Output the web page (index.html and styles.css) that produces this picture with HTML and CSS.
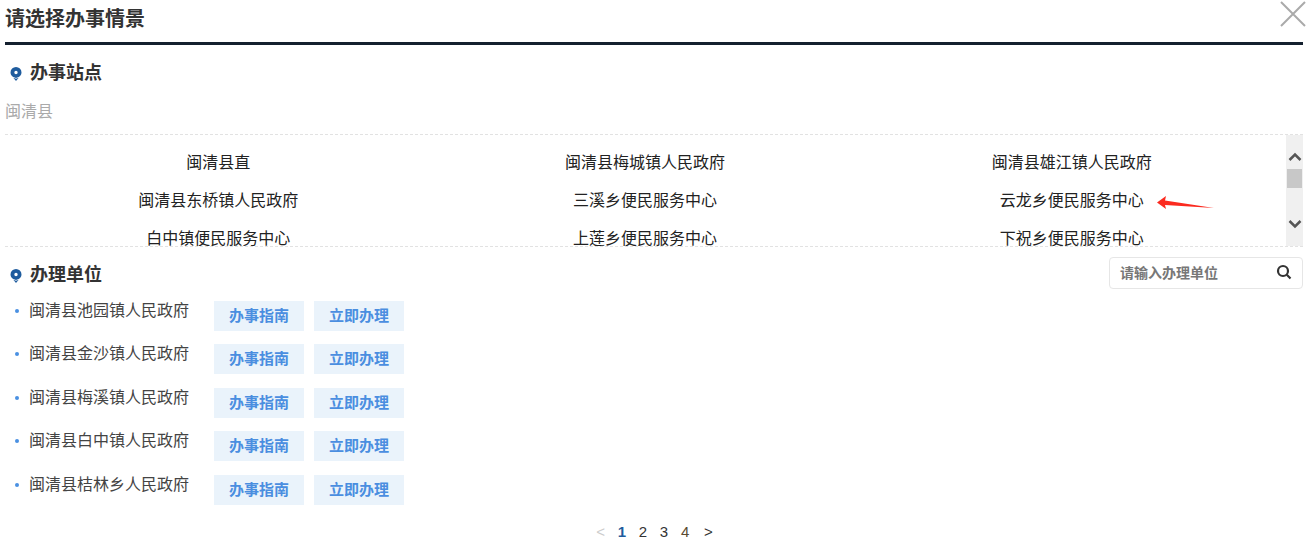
FILE: index.html
```html
<!DOCTYPE html>
<html lang="zh">
<head>
<meta charset="utf-8">
<title>请选择办事情景</title>
<link rel="stylesheet" href="styles.css">
</head>
<body>
<div class="modal">
  <header class="modal-head">
    <h1>请选择办事情景</h1>
    <svg class="close" viewBox="0 0 26 26"><path d="M1 1 25 25M25 1 1 25"/></svg>
  </header>
  <h2 class="sec-title site-title"><svg class="pin" viewBox="0 0 12 14"><path fill-rule="evenodd" d="M6 0a5.500 5.500 0 0 1 5.500 5.500c0 2.200-1.300 3.500-2.800 4.500L6 11l-2.700-1C1.800 9 .5 7.700.5 5.500A5.500 5.500 0 0 1 6 0Zm0 3.800a1.700 1.700 0 1 0 0 3.400 1.700 1.700 0 0 0 0-3.400ZM3.300 10.800 6 11.800l2.700-1L6 14Z"/></svg>办事站点</h2>
  <div class="county">闽清县</div>
  <div class="sites">
    <div class="site-grid">
      <a>闽清县直</a><a>闽清县梅城镇人民政府</a><a>闽清县雄江镇人民政府</a>
      <a>闽清县东桥镇人民政府</a><a>三溪乡便民服务中心</a><a>云龙乡便民服务中心</a>
      <a>白中镇便民服务中心</a><a>上莲乡便民服务中心</a><a>下祝乡便民服务中心</a>
    </div>
    <div class="scrollbar">
      <svg class="sb-arrow" viewBox="0 0 14 10"><path d="M1.500 8 7 2.500 12.500 8"/></svg>
      <div class="sb-thumb"></div>
      <svg class="sb-arrow sb-down" viewBox="0 0 14 10"><path d="M1.500 2 7 7.500 12.500 2"/></svg>
    </div>
    <svg class="red-arrow" viewBox="0 0 58 14"><path d="M0 6.500 9 0 8 4.500 57 12 8 9 9 13Z"/></svg>
  </div>
  <div class="unit-head">
    <h2 class="sec-title"><svg class="pin" viewBox="0 0 12 14"><path fill-rule="evenodd" d="M6 0a5.500 5.500 0 0 1 5.500 5.500c0 2.200-1.300 3.500-2.800 4.500L6 11l-2.700-1C1.800 9 .5 7.700.5 5.500A5.500 5.500 0 0 1 6 0Zm0 3.800a1.700 1.700 0 1 0 0 3.400 1.700 1.700 0 0 0 0-3.400ZM3.300 10.800 6 11.800l2.700-1L6 14Z"/></svg>办理单位</h2>
    <div class="search">
      <span>请输入办理单位</span>
      <svg viewBox="0 0 16 16"><circle cx="7" cy="7" r="5"/><path d="m10.800 10.800 3.700 3.700"/></svg>
    </div>
  </div>
  <ul class="units">
    <li><span class="name">闽清县池园镇人民政府</span><a class="btn">办事指南</a><a class="btn">立即办理</a></li>
    <li><span class="name">闽清县金沙镇人民政府</span><a class="btn">办事指南</a><a class="btn">立即办理</a></li>
    <li><span class="name">闽清县梅溪镇人民政府</span><a class="btn">办事指南</a><a class="btn">立即办理</a></li>
    <li><span class="name">闽清县白中镇人民政府</span><a class="btn">办事指南</a><a class="btn">立即办理</a></li>
    <li><span class="name">闽清县桔林乡人民政府</span><a class="btn">办事指南</a><a class="btn">立即办理</a></li>
  </ul>
  <nav class="pager">
    <span class="off">&lt;</span><span class="cur">1</span><span>2</span><span>3</span><span class="four">4</span><span>&gt;</span>
  </nav>
</div>
</body>
</html>
```

FILE: styles.css
```css
* { box-sizing: border-box; }
html, body { margin: 0; padding: 0; background: #fff; }
body {
  width: 1310px;
  height: 557px;
  overflow: hidden;
  font-family: "Noto Sans CJK SC", "Liberation Sans", sans-serif;
  color: #333;
}
.modal { padding: 0 7px 0 5px; }
.modal-head {
  position: relative;
  height: 45px;
  border-bottom: 3px solid #14202e;
}
.modal-head h1 {
  margin: 0;
  font-size: 20px;
  line-height: 36px;
  font-weight: 700;
  color: #333;
}
.close {
  position: absolute;
  right: -3px;
  top: 1px;
  width: 26px;
  height: 26px;
  fill: none;
  stroke: #aaa;
  stroke-width: 2;
}
.sec-title {
  display: flex;
  align-items: center;
  margin: 0;
  font-size: 18px;
  line-height: 28px;
  font-weight: 700;
  color: #333;
}
.site-title { margin-top: 12px; }
.pin {
  width: 12px;
  height: 14px;
  margin: 5px 8px 0 5px;
  fill: #1f5c9e;
}
.county {
  margin-top: 13px;
  height: 37px;
  font-size: 16px;
  line-height: 24px;
  color: #aaa;
  border-bottom: 1px dashed #e2e2e2;
}
.sites {
  position: relative;
  display: flex;
  height: 112px;
  overflow: hidden;
  border-bottom: 1px dashed #e2e2e2;
}
.site-grid {
  flex: 1;
  display: grid;
  grid-template-columns: repeat(3, 1fr);
  grid-auto-rows: 38px;
  padding: 7px 1px 0 0;
  font-size: 16px;
  line-height: 38px;
  color: #222;
  text-align: center;
}
.scrollbar {
  width: 17px;
  height: 111px;
  background: #f0f0f0;
  display: flex;
  flex-direction: column;
  align-items: center;
  padding-top: 17px;
}
.sb-arrow {
  width: 14px;
  height: 10px;
  fill: none;
  stroke: #555;
  stroke-width: 2.500;
}
.sb-thumb {
  width: 15px;
  height: 19px;
  margin-top: 7px;
  background: #c8c8c8;
}
.sb-down { margin-top: 31px; }
.red-arrow {
  position: absolute;
  left: 1152px;
  top: 61px;
  width: 58px;
  height: 14px;
  fill: #fb2a1f;
}
.unit-head {
  display: flex;
  justify-content: space-between;
  align-items: center;
  height: 44px;
  padding-top: 8px;
}
.search {
  display: flex;
  align-items: center;
  justify-content: space-between;
  width: 194px;
  height: 32px;
  padding: 0 10px 2px;
  border: 1px solid #e6e6e6;
  border-radius: 4px;
  font-size: 14px;
  font-weight: 700;
  color: #777;
}
.search svg {
  width: 16px;
  height: 16px;
  fill: none;
  stroke: #333;
  stroke-width: 2.200;
}
.units {
  list-style: none;
  margin: 9.900px 0 0;
  padding: 0;
  display: flex;
  flex-direction: column;
  gap: 13.500px;
}
.units li {
  display: flex;
  height: 30px;
  align-items: flex-start;
}
.name {
  position: relative;
  width: 209px;
  padding-left: 24px;
  font-size: 16px;
  line-height: 16px;
  color: #444;
}
.name::before {
  content: "";
  position: absolute;
  left: 10px;
  top: 8px;
  width: 4px;
  height: 4px;
  border-radius: 50%;
  background: #4a90e2;
}
.btn {
  width: 90px;
  height: 30px;
  margin-right: 10px;
  background: #eaf3fb;
  color: #4a8ee0;
  font-size: 15px;
  font-weight: 700;
  line-height: 28px;
  text-align: center;
}
.pager {
  display: flex;
  justify-content: center;
  gap: 12.700px;
  margin-top: 17px;
  padding-left: 1px;
  font-family: "Liberation Sans", sans-serif;
  font-size: 15px;
  line-height: 20px;
  color: #333;
}
.pager .off { color: #ccc; }
.pager .cur { color: #1f5c9e; font-weight: 700; }
.pager .four { color: #5a4a32; margin-right: 2px; }
```
